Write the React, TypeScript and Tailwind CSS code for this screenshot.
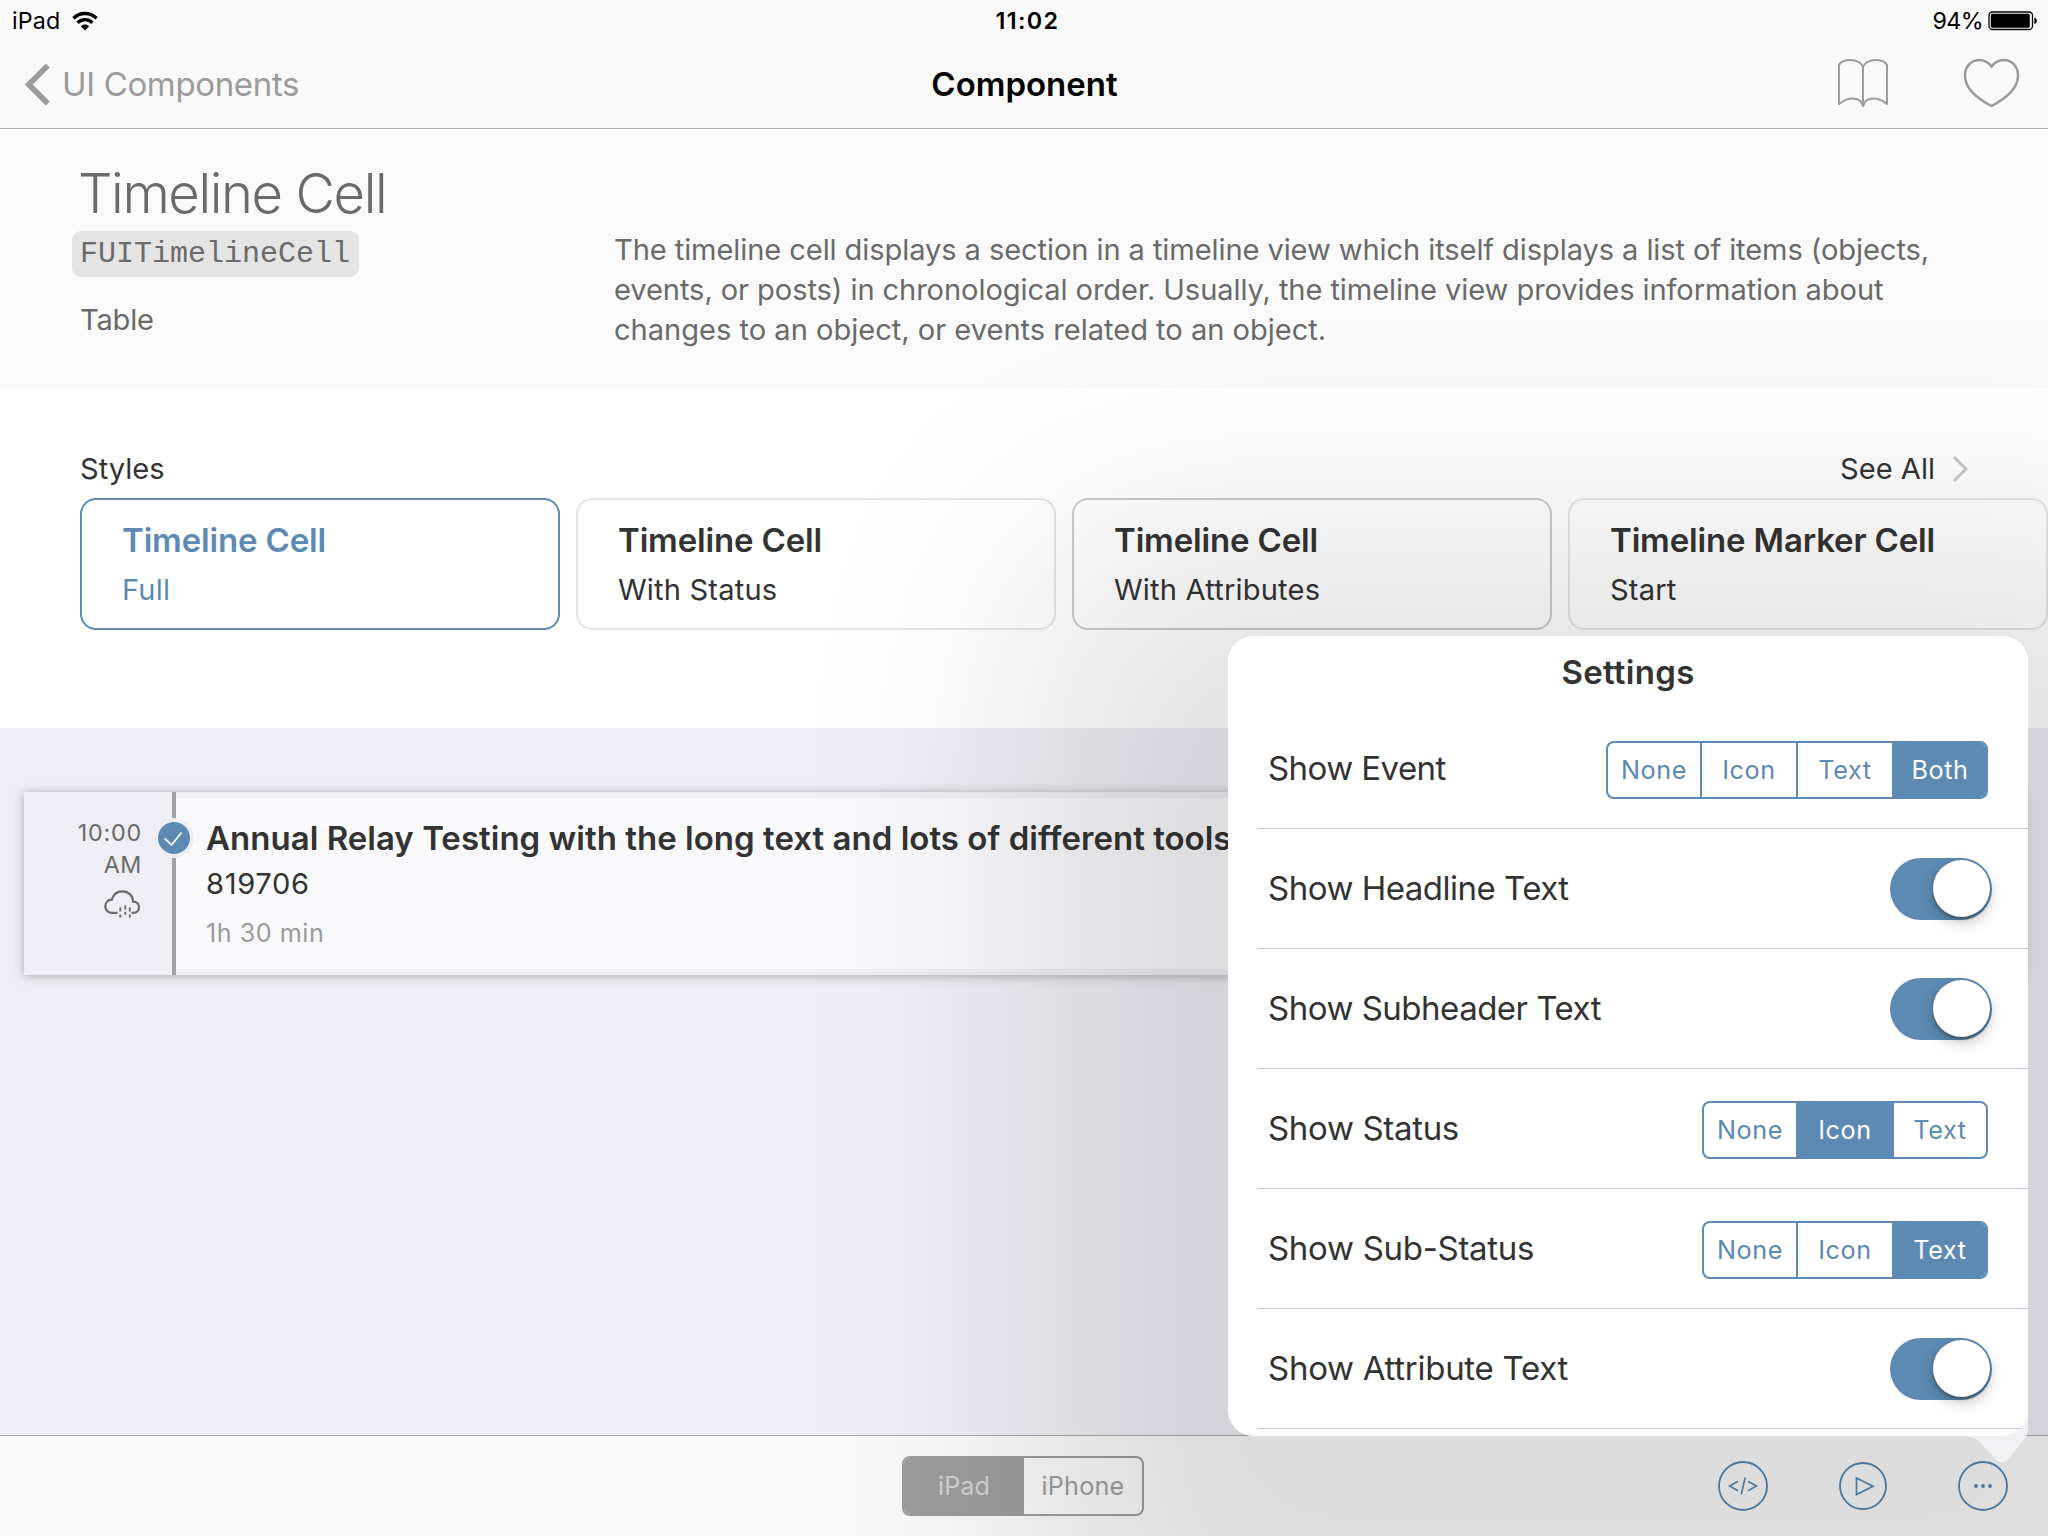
const styleCards = [
  { title: "Timeline Cell", subtitle: "Full", look: "border-[#5d8ab2] text-[#5d8ab2]" },
  { title: "Timeline Cell", subtitle: "With Status", look: "border-[#e5e5e5] text-[#333333]" },
  { title: "Timeline Cell", subtitle: "With Attributes", look: "border-[#cbcbcb] text-[#333333]" },
  { title: "Timeline Marker Cell", subtitle: "Start", look: "border-[#e5e5e5] text-[#333333]" },
];

type Setting = { label: string; tracking: string; options?: string[]; selected?: string };

const settings: Setting[] = [
  { label: "Show Event", tracking: "tracking-[-0.57px]", options: ["None", "Icon", "Text", "Both"], selected: "Both" },
  { label: "Show Headline Text", tracking: "tracking-[-0.5px]" },
  { label: "Show Subheader Text", tracking: "tracking-[-0.5px]" },
  { label: "Show Status", tracking: "tracking-[-0.33px]", options: ["None", "Icon", "Text"], selected: "Icon" },
  { label: "Show Sub-Status", tracking: "tracking-[-0.3px]", options: ["None", "Icon", "Text"], selected: "Text" },
  { label: "Show Attribute Text", tracking: "tracking-[-0.28px]" },
];

function StatusBar() {
  return (
    <div className="grid h-[41px] grid-cols-[1fr_200px_1fr] items-center bg-[#f9f9f9] pr-[11px] pl-[12px] text-[23.3px] text-black">
      <div className="flex items-center">
        <span className="pt-px tracking-[0.1px]">iPad</span>
        <svg className="ml-[12px]" width="26" height="20" viewBox="0 0 26 20" fill="none" stroke="#000" strokeWidth="3.3">
          <path d="M1.4 7.2C8 .9 18 .9 24.6 7.2" />
          <path d="M5.6 11.7c4.2-4 10.6-4 14.8 0" />
          <path d="M8.9 15.2c2.3-2.3 5.9-2.3 8.2 0L13 19.6z" fill="#000" stroke="none" />
        </svg>
      </div>
      <div className="pt-px pl-[6px] text-center font-semibold tracking-[1.4px]">11:02</div>
      <div className="flex items-center justify-end">
        <span className="pt-px tracking-[-0.6px]">94%</span>
        <svg className="ml-[5px]" width="49" height="20" viewBox="0 0 49 20">
          <rect x="1" y="1" width="43.5" height="17.5" rx="3.5" fill="none" stroke="#000" strokeWidth="1.3" />
          <rect x="2.800" y="2.800" width="39" height="14" rx="1.6" fill="#000" />
          <path d="M46.3 6.500c3.400.6 3.400 6 0 6.600z" fill="#000" />
        </svg>
      </div>
    </div>
  );
}

function NavBar() {
  return (
    <div className="grid h-[88px] grid-cols-[1fr_400px_1fr] items-center border-b border-[#b2b2b2] bg-[#f9f9f9] pr-[28px] pl-[24px] text-[33px]">
      <div className="flex items-center text-[#9b9b9b]">
        <svg width="28" height="52" viewBox="0 0 28 52" fill="none" stroke="#9b9b9b" strokeWidth="5.6">
          <path d="M23.800 6.500 4.800 25.500 23.800 44.500" />
        </svg>
        <span className="ml-[10px] tracking-[-0.35px]">UI Components</span>
      </div>
      <div className="pl-[5px] text-center font-semibold text-black">Component</div>
      <div className="flex items-center justify-end gap-[74px] pb-[4px]">
        <svg width="52" height="50" viewBox="0 0 52 50" fill="none" stroke="#9b9b9b" strokeWidth="2" strokeLinejoin="round">
          <path d="M26 9C24 4.500 19 2 13.500 2 8 2 3.500 4 2 7v39c4-3.200 8.500-5.500 13.500-5.500 6 0 9.500 3.500 10.500 7.500 1-4 4.500-7.500 10.500-7.500 5 0 9.500 2.300 13.500 5.500V7c-1.500-3-6-5-11.500-5S28 4.500 26 9zM26 9v39" />
        </svg>
        <svg width="57" height="50" viewBox="0 0 57 50" fill="none" stroke="#9b9b9b" strokeWidth="2.500">
          <path d="M28.500 8.500C25 4 21.500 2 16.500 2 8 2 2 8.500 2 17.500 2 31 14 40 28.500 48 43 40 55 31 55 17.500 55 8.500 49 2 40.500 2 35.500 2 32 4 28.500 8.500z" />
        </svg>
      </div>
    </div>
  );
}

function Summary() {
  return (
    <section className="flex h-[259px] bg-[#fafafa] pl-[80px] text-[29.1px] text-[#6a6a6a]">
      <div className="w-[534px] pt-[33px]">
        <h1 className="-ml-[2px] h-[63px] text-[54.3px] leading-[63px] font-light tracking-[-1.4px]">Timeline Cell</h1>
        <div className="mt-[6px] -ml-[8px] flex h-[46px] w-[287px] items-center rounded-[9px] bg-[#e5e5e5] pl-[8px] font-['Liberation_Mono'] text-[30px]">
          FUITimelineCell
        </div>
        <div className="mt-[23px] leading-[40px] tracking-[-0.2px]">Table</div>
      </div>
      <p className="pt-[101px] leading-[40px] tracking-[-0.1px]">
        The timeline cell displays a section in a timeline view which itself displays a list of items (objects,
        <br />
        <span className="tracking-[-0.09px]">events, or posts) in chronological order. Usually, the timeline view provides information about</span>
        <br />
        <span className="tracking-[-0.02px]">changes to an object, or events related to an object.</span>
      </p>
    </section>
  );
}

function Styles() {
  return (
    <section className="h-[340px] bg-white pt-[61px] pl-[80px] text-[29.1px] text-[#333333]">
      <div className="flex h-[40px] items-center justify-between pr-[80px]">
        <span>Styles</span>
        <span className="flex items-center">
          See All
          <svg className="-mt-px ml-[16px]" width="17" height="28" viewBox="0 0 17 28" fill="none" stroke="#c7c7cc" strokeWidth="3">
            <path d="M3 2l12 12L3 26" />
          </svg>
        </span>
      </div>
      <div className="mt-[9px] flex gap-[16px]">
        {styleCards.map((card) => (
          <div
            key={card.title + card.subtitle}
            className={`h-[132px] w-[480px] shrink-0 rounded-[16px] border-2 pt-[20px] pl-[40px] leading-[40px] ${card.look}`}
          >
            <div className="text-[33px] font-semibold tracking-[-0.15px]">{card.title}</div>
            <div className="mt-[10px] tracking-[0.18px]">{card.subtitle}</div>
          </div>
        ))}
      </div>
    </section>
  );
}

function SleetIcon() {
  return (
    <svg width="37" height="29" viewBox="0 0 37 29" fill="none" stroke="#6a6a6a" strokeWidth="2.200">
      <path d="M13.500 22.800H8C4 22.800 1.300 20 1.300 16.300c0-3.800 2.700-6.500 6.500-6.600C9.200 4.500 13.300 1.300 18.600 1.300c6 0 10.400 4.300 10.400 10.300 3.500 0 6 2.300 6 5.700 0 3.200-2.300 5.500-5.500 5.500h-2" />
      <path d="M16.300 17.500v4M16.300 24.500v3M21.300 15.500v4M21.300 21.800v3M25.800 17.500v4M25.800 24.500v3" strokeWidth="1.900" />
    </svg>
  );
}

function TimelineCard() {
  return (
    <div className="mx-[24px] flex h-[183px] bg-[#efeef4] shadow-[0_1px_9px_1px_rgba(0,0,0,0.24)]">
      <div className="flex w-[148px] flex-col items-end pt-[25px] pr-[30px] text-[23.3px] leading-[32px] text-[#6a6a6a]">
        <span className="tracking-[0.8px]">10:00</span>
        <span className="tracking-[0.6px]">AM</span>
        <div className="mt-[9px] mr-px">
          <SleetIcon />
        </div>
      </div>
      <div className="relative w-[4px] bg-[#a3a3a3]">
        <svg className="absolute top-[26px] -left-[18px]" width="40" height="40" viewBox="0 0 40 40">
          <circle cx="20" cy="20" r="20" fill="#efeef4" />
          <circle cx="20" cy="20" r="16" fill="#5d8ab2" />
          <path d="M10.800 20.700l6.700 6.300 10-12.500" fill="none" stroke="#fff" strokeWidth="1.800" />
        </svg>
      </div>
      <div className="my-[6px] flex-1 overflow-hidden bg-[#f9f9fb] pt-[20px] pl-[30px] leading-[40px] whitespace-nowrap text-[#333333]">
        <div className="text-[33px] font-semibold tracking-[0.02px]">
          Annual Relay Testing with the long text and lots of different tools
        </div>
        <div className="mt-[6px] text-[29.1px] tracking-[0.65px]">819706</div>
        <div className="mt-[9px] text-[25.2px] tracking-[0.5px] text-[#9b9b9b]">1h 30 min</div>
      </div>
    </div>
  );
}

function Toolbar() {
  return (
    <footer className="flex h-[101px] items-center border-t border-[#a9a9a9] bg-[#f9f9f9] pr-[40px] pl-[902px]">
      <div className="flex h-[60px] w-[242px] overflow-hidden rounded-[8px] border-2 border-[#9d9d9d] text-[25.2px] leading-[56px]">
        <div className="w-[120px] bg-[#9d9d9d] text-center text-[#d3d3d3]">iPad</div>
        <div className="flex-1 text-center tracking-[0.2px] text-[#9d9d9d]">iPhone</div>
      </div>
      <div className="flex flex-1 items-center justify-end gap-[70px]">
        <svg width="50" height="50" viewBox="0 0 50 50" fill="none" stroke="#5585b0" strokeWidth="1.800">
          <circle cx="25" cy="25" r="24" />
          <path d="M20 20.200l-8.500 4.800 8.500 4.800M30 20.200l8.500 4.800-8.500 4.800M27.200 16.500l-4 17" strokeWidth="1.600" />
        </svg>
        <svg width="50" height="50" viewBox="0 0 50 50" fill="none" stroke="#5585b0" strokeWidth="1.800">
          <circle cx="25" cy="25" r="23" />
          <path d="M18.500 17v16.500l16.500-8.300z" strokeWidth="1.700" />
        </svg>
        <svg width="50" height="50" viewBox="0 0 50 50" fill="none" stroke="#5585b0" strokeWidth="1.800">
          <circle cx="25" cy="25" r="24" />
          <g fill="#5585b0" stroke="none">
            <circle cx="18" cy="25" r="1.900" />
            <circle cx="25" cy="25" r="1.900" />
            <circle cx="32" cy="25" r="1.900" />
          </g>
        </svg>
      </div>
    </footer>
  );
}

function Segmented({ options, selected }: { options: string[]; selected?: string }) {
  return (
    <div className="mt-[3px] flex h-[58px] divide-x-2 divide-[#5d8ab2] overflow-hidden rounded-[8px] border-2 border-[#5d8ab2] text-[25.2px] leading-[54px] tracking-[0.6px]">
      {options.map((option) => (
        <div
          key={option}
          className={`w-[96px] text-center first:w-[94px] last:w-[92px] ${option === selected ? "bg-[#5d8ab2] text-white" : "text-[#5d8ab2]"}`}
        >
          {option}
        </div>
      ))}
    </div>
  );
}

function Toggle() {
  return (
    <div className="-mr-[4px] flex h-[62px] w-[102px] items-center justify-end rounded-full bg-[#5d8ab2] pr-[2px]">
      <div className="size-[57px] rounded-full bg-white shadow-[0_6px_14px_rgba(0,0,0,0.22),0_2px_3px_rgba(0,0,0,0.3)]" />
    </div>
  );
}

function SettingsPopover() {
  return (
    <div className="absolute top-[636px] left-[1228px] h-[800px] w-[800px] rounded-[26px] shadow-[0_92px_240px_200px_rgba(0,0,0,0.115)]">
      <svg className="absolute top-[740px] left-[700px]" width="100" height="90" viewBox="0 0 100 90">
        <path d="M30 59.800C44 60 49 62 54 69L67.500 83c4 4.300 9 4.300 13 0L98 61c1.500-3 2-6 2-12V10H30z" fill="#f1f1f3" />
      </svg>
      <div className="relative h-full overflow-hidden rounded-[26px] bg-white text-[#333333]">
        <h2 className="h-[72px] text-center text-[33px] leading-[72px] font-semibold tracking-[0.3px]">Settings</h2>
        {settings.map((setting) => (
          <div key={setting.label} className="ml-[30px] flex h-[120px] items-center border-b border-[#c8c7cc] first-of-type:h-[121px]">
            <div className="flex flex-1 items-center justify-between pr-[40px] pl-[10px]">
              <span className={`-mt-px text-[33px] leading-[40px] ${setting.tracking}`}>{setting.label}</span>
              {setting.options ? <Segmented options={setting.options} selected={setting.selected} /> : <Toggle />}
            </div>
          </div>
        ))}
      </div>
    </div>
  );
}

export default function App() {
  return (
    <div className="relative flex h-[1536px] w-[2048px] flex-col overflow-hidden bg-[#efeef4] font-[Inter,sans-serif]">
      <StatusBar />
      <NavBar />
      <Summary />
      <Styles />
      <main className="flex-1 pt-[64px]">
        <TimelineCard />
      </main>
      <Toolbar />
      <SettingsPopover />
    </div>
  );
}
